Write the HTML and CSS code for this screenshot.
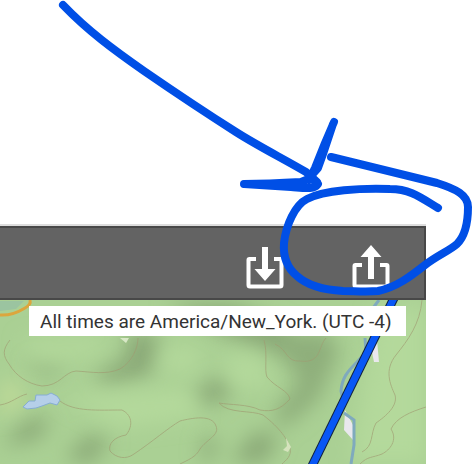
FILE: index.html
```
<!DOCTYPE html>
<html lang="en">
<head>
    <meta charset="UTF-8">
    <meta name="viewport" content="width=device-width, initial-scale=1.0">
    <title>Track Map</title>
    <link rel="stylesheet" href="styles.css">
</head>
<body>
    <div class="viewer">
        <div class="toolbar">
            <button type="button" class="tool" aria-label="Import">
                <svg class="icon" viewBox="0 0 40 46">
                    <path class="tray" d="M11 15H4.500Q3.500 15 3.500 16V41Q3.500 42.500 5 42.500H35Q36.500 42.500 36.500 41V16Q36.500 15 35.500 15H29"/>
                    <path class="arrow" d="M17 3H23V25H30.500L20 37L9.500 25H17Z"/>
                </svg>
            </button>
            <button type="button" class="tool" aria-label="Export">
                <svg class="icon" viewBox="0 0 40 46">
                    <path class="tray" d="M11 21H4.500Q3.500 21 3.500 22V41Q3.500 42.500 5 42.500H35Q36.500 42.500 36.500 41V22Q36.500 21 35.500 21H29"/>
                    <path class="arrow" d="M17 35H23V13H30.500L20 1L9.500 13H17Z"/>
                </svg>
            </button>
        </div>
        <div class="map">
            <svg class="terrain" viewBox="0 0 426 164" preserveAspectRatio="xMinYMin slice">
                <defs>
                    <filter id="soft" x="-50%" y="-50%" width="200%" height="200%">
                        <feGaussianBlur stdDeviation="10"/>
                    </filter>
                    <filter id="edge">
                        <feGaussianBlur stdDeviation="0.6"/>
                    </filter>
                </defs>
                <rect width="426" height="164" fill="#aad094"/>
                <!-- hills -->
                <g filter="url(#soft)" fill="#8aa977">
                    <path d="M130 30L160 35L150 75L105 85L95 73L125 60Z"/>
                    <path d="M185 100L215 78L235 85L220 104Z"/>
                    <path d="M0 146L30 118L52 120L36 140Z"/>
                    <path d="M65 158L88 136L112 138L90 164Z"/>
                    <path d="M265 38L325 30L340 50L318 100L285 128L272 115L300 80Z" opacity="0.85"/>
                    <path d="M165 4H235L295 30L275 54L225 35Z"/>
                    <path d="M230 160L258 130L280 140L262 164Z"/>
                    <path d="M30 60L60 64L58 78L30 70Z" opacity="0.6"/>
                    <path d="M205 135L218 142L210 164L200 155Z"/>
                </g>
                <g filter="url(#soft)" fill="#b4d99b">
                    <path d="M20 40L110 38L95 56L35 58Z"/>
                    <path d="M170 45L205 50L190 75L160 68Z"/>
                    <path d="M222 55L260 55L272 88L235 88Z"/>
                    <path d="M60 96L190 88L200 118L120 128Z"/>
                    <path d="M375 10L426 5V164H350Z"/>
                    <path d="M0 85L20 80L22 106L0 116Z" fill="#c0da98"/>
                </g>
                <!-- contours -->
                <g class="contour" filter="url(#edge)">
                    <path d="M10 40C2 50 3 56 9 64C16 76 28 84 42 86C60 86 64 72 76 71C92 72 106 75 120 69C132 62 138 48 138 38"/>
                    <path d="M0 105C12 103 18 96 27 94M60 101C74 112 98 110 122 110C134 116 132 128 126 135C114 137 108 144 110 151C116 158 126 160 134 154C152 142 168 128 180 121C192 118 212 114 216 126C220 135 206 140 200 149C196 157 188 160 180 164"/>
                    <path d="M264 40C268 54 264 70 267 77C276 88 288 90 290 99C280 110 272 112 260 110C248 104 230 105 219 103C228 114 252 110 263 115C280 128 288 140 290 148C292 156 286 160 282 164"/>
                    <path d="M275 44C288 50 286 62 300 61C322 64 318 46 326 38"/>
                    <path d="M422 0C420 24 408 40 396 55C384 70 390 84 395 95C398 106 386 116 376 123C370 134 374 146 362 152"/>
                    <path d="M426 107C410 112 396 118 391 129C398 140 390 150 382 154C372 158 368 156 360 164"/>
                </g>
                <g filter="url(#edge)">
                    <path d="M0 1H24L16 9L0 11Z" fill="#9bc4a0"/>
                    <path d="M0 15C12 16 20 11 25 8C29 6 31 4 30 0" fill="none" stroke="#dca63d" stroke-width="3"/>
                    <path class="lake" d="M23 107L29 101L35 101L36 95H47L51 93L57 96L60 100L57 105L50 103L42 106L36 108L27 109Z"/>
                    <path d="M120 38H129L126 43Z" fill="#d8e8c6"/>
                    <path d="M286 138L291 147L288 152L283 150L287 146Z" fill="#d5e3bd"/>
                    <!-- river -->
                    <path class="river" d="M379 0L370 12M365 38L366 52L357 62C347 72 342 78 341 91L344 105"/>
                    <path d="M370 42L377 40L379 62L374 62ZM345 110L353 125L353 140L344 130Z" fill="#e9e8ed"/>
                    <path class="river" d="M344 113L354 120L354 145L351 164"/>
                </g>
                <path class="track-edge" d="M394 -2L312 166"/>
                <path class="track" d="M394 -2L312 166"/>
            </svg>
            <div class="timezone">All times are America/New_York. (UTC -4)</div>
        </div>
    </div>

    <svg class="drawing" viewBox="0 0 474 464" preserveAspectRatio="xMinYMin meet" aria-hidden="true">
        <path d="M63 5C88 31 114 50 144 71C176 93 206 113 236 132C258 146 282 158 306 172L317 182"/>
        <path d="M334 122L325 143L315 168L309 180M333 124L323 154L318 168L309 178"/>
        <path d="M244 184C264 184 284 183 301 182L311 178L318 184C314 190 304 188 291 187L244 184"/>
        <path d="M331 157L380 169L437 183C456 189 468 195 468 207C468 221 465 236 457 244C449 251 438 255 425 265C411 276 397 287 378 291C366 292 354 291 343 291C326 290 309 287 297 276C286 267 283 256 284 243C286 225 295 205 307 199C324 190 361 188 390 189C410 189 420 197 438 208"/>
    </svg>
</body>
</html>
```
FILE: styles.css
```
* {
    box-sizing: border-box;
}
body {
    margin: 0;
    background-color: #fff;
    font-family: Roboto, sans-serif;
    position: relative;
}
.viewer {
    display: flex;
    flex-direction: column;
    min-height: 100vh;
    padding: 224px 48px 0 0;
}
.toolbar {
    display: flex;
    justify-content: flex-end;
    gap: 66px;
    padding: 16px 33px 8px;
    background: #636363;
    border: 2px solid #484848;
    border-left: none;
    outline: 2px solid #dedede;
    outline-offset: 0;
    clip-path: inset(-2px 0 0 0);
    margin-top: 2px;
}
.tool {
    width: 40px;
    height: 46px;
    padding: 0;
    border: none;
    background: none;
    cursor: pointer;
}
.icon {
    display: block;
    width: 40px;
    height: 46px;
}
.tray {
    fill: none;
    stroke: #fff;
    stroke-width: 4;
}
.arrow {
    fill: #fff;
}
.map {
    flex: 1;
    position: relative;
    overflow: hidden;
    padding: 6px 20px 20px 29px;
    background: #aad094;
}
.terrain {
    position: absolute;
    inset: 0;
    width: 100%;
    height: 100%;
}
.contour {
    fill: none;
    stroke: #a09b72;
    stroke-width: 1;
    opacity: 0.65;
}
.lake {
    fill: #b5cfe9;
    stroke: #86add2;
    stroke-width: 1;
}
.river {
    fill: none;
    stroke: #7faabd;
    stroke-width: 3;
}
.track-edge {
    fill: none;
    stroke: #10203c;
    stroke-width: 9;
}
.track {
    fill: none;
    stroke: #0857f5;
    stroke-width: 7;
}
.timezone {
    position: relative;
    height: 30px;
    padding: 0 11px;
    background: #fff;
    color: #333;
    font-size: 19px;
    line-height: 32px;
    white-space: nowrap;
}
.drawing {
    position: absolute;
    top: 0;
    left: 0;
    width: 100%;
    fill: none;
    stroke: #004fe6;
    stroke-width: 8;
    stroke-linecap: round;
    stroke-linejoin: round;
    pointer-events: none;
}
```
